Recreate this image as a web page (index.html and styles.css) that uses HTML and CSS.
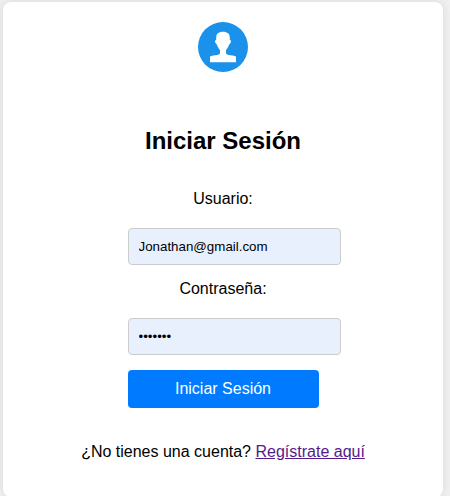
FILE: index.html
```html
<!DOCTYPE html>
<html lang="es">
<head>
<meta charset="utf-8">
<title>Iniciar Sesión</title>
<link rel="stylesheet" href="styles.css">
</head>
<body>
<main class="card">
  <svg class="avatar" viewBox="0 0 50 50" aria-hidden="true">
    <circle cx="25" cy="25" r="25" fill="#1a91eb"/>
    <path fill="#fff" d="M25 9.800C20.500 9.800 18.200 12 18.200 15.500V18C17 18 16.700 19 17.200 20.300C17.700 21.500 18.200 22.300 19 22.800C19.800 25.200 20.800 26.900 22 28V31C22 32.500 20 33 17.500 33.300C14 33.700 12 34 12 35V40.200H38V35C38 34 36 33.700 32.500 33.300C30 33 28 32.500 28 31V28C29.200 26.900 30.200 25.200 31 22.800C31.800 22.300 32.300 21.500 32.800 20.300C33.300 19 33 18 31.800 18V15.500C31.800 12 29.500 9.800 25 9.800Z"/>
  </svg>
  <h2 class="title">Iniciar Sesión</h2>
  <form class="form">
    <label class="label" for="user">Usuario:</label>
    <input class="field" id="user" type="text" value="Jonathan@gmail.com">
    <label class="label" for="pass">Contraseña:</label>
    <input class="field" id="pass" type="password" value="1234567">
    <button class="submit" type="button">Iniciar Sesión</button>
  </form>
  <p class="signup">¿No tienes una cuenta? <a class="link" href="#">Regístrate aquí</a></p>
</main>
</body>
</html>
```

FILE: styles.css
```css
html {
  overflow: hidden;
}

body {
  margin: 0;
  padding: 2px 7px 0 3px;
  background: #f0f0f0;
  font-family: "Liberation Sans", Arial, sans-serif;
  font-size: 16px;
  line-height: 18px;
  color: #000;
}

.card {
  box-sizing: border-box;
  height: 495px;
  padding-top: 20px;
  border-radius: 8px;
  background: #fff;
  box-shadow: 0 0 10px rgba(0, 0, 0, 0.1);
  text-align: center;
}

.avatar {
  display: block;
  width: 50px;
  height: 50px;
  margin: 0 auto;
}

.title {
  margin: 55px 0 36px;
  font-size: 24px;
  line-height: 27px;
}

.form {
  width: 191px;
  margin: 0 auto;
}

.label {
  display: block;
  margin-bottom: 20px;
}

.field {
  display: block;
  box-sizing: border-box;
  width: 213px;
  height: 37px;
  margin: 0 0 15px;
  padding: 10px;
  border: 1px solid #ccc;
  border-radius: 4px;
  background: #e8f0fe;
  font-family: "Liberation Sans", Arial, sans-serif;
  font-size: 13.333px;
  color: #000;
}

.submit {
  display: block;
  width: 191px;
  height: 38px;
  padding: 0;
  border: 0;
  border-radius: 4px;
  background: #007bff;
  color: #fff;
  font-family: inherit;
  font-size: 16px;
}

.signup {
  margin: 35px 0 0;
}

.link {
  color: #551a8b;
}
```
